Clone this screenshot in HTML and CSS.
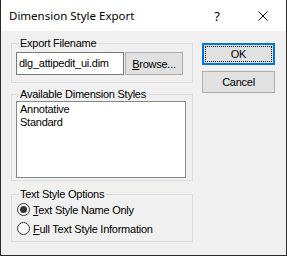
FILE: index.html
```html
<!DOCTYPE html>
<html>
<head>
<meta charset="utf-8">
<link rel="stylesheet" href="styles.css">
</head>
<body>
<div class="window">
  <div class="titlebar">
    <div class="title">Dimension Style Export</div>
    <div class="tb-btn help">?</div>
    <div class="tb-btn close">
      <svg width="10" height="10" viewBox="0 0 10 10"><path d="M0.5 0.5 L9.5 9.5 M9.5 0.5 L0.5 9.5" stroke="#000" stroke-width="1" fill="none"/></svg>
    </div>
  </div>
  <div class="content">
    <div class="left">
      <fieldset class="group g1">
        <legend>Export Filename</legend>
        <div class="file-row">
          <div class="textbox">dlg_attipedit_ui.dim</div>
          <div class="btn browse"><u>B</u>rowse...</div>
        </div>
      </fieldset>
      <fieldset class="group g2">
        <legend>Available Dimension Styles</legend>
        <div class="listbox">
          <div class="item">Annotative</div>
          <div class="item">Standard</div>
        </div>
      </fieldset>
      <fieldset class="group g3">
        <legend>Text Style Options</legend>
        <div class="radio-row"><span class="radio checked"></span><span><u>T</u>ext Style Name Only</span></div>
        <div class="radio-row"><span class="radio"></span><span><u>F</u>ull Text Style Information</span></div>
      </fieldset>
    </div>
    <div class="right">
      <div class="btn dlg default">OK</div>
      <div class="btn dlg">Cancel</div>
    </div>
  </div>
</div>
</body>
</html>
```
FILE: styles.css
```css
html, body {
  margin: 0;
  padding: 0;
  background: #f0f0f0;
}
.window {
  width: 287px;
  height: 256px;
  box-sizing: border-box;
  border: 1px solid #2b2b2b;
  border-top: none;
  background: #f0f0f0;
  display: flex;
  flex-direction: column;
  font-family: "Liberation Sans", Arial, sans-serif;
  font-size: 11px;
  letter-spacing: -0.25px;
  color: #000;
}
.titlebar {
  height: 31px;
  background: #fff;
  display: flex;
  align-items: center;
  flex: none;
  letter-spacing: 0;
}
.title {
  flex: 1;
  padding-left: 8px;
  font-family: "Noto Sans", sans-serif;
  font-size: 11.5px;
  padding-bottom: 1px;
}
.tb-btn {
  width: 46px;
  height: 31px;
  display: flex;
  align-items: center;
  justify-content: center;
}
.help {
  font-family: "Noto Sans", sans-serif;
  font-size: 13px;
}
.content {
  display: flex;
  padding: 6px 11px 0 10px;
  gap: 9px;
}
.left {
  width: 182px;
  display: flex;
  flex-direction: column;
}
.group {
  margin: 0;
  border: 1px solid #dcdcdc;
  padding: 0 6px 0 4px;
  min-width: 0;
}
.group legend {
  padding: 0 1px;
  margin-left: 3px;
  line-height: 13px;
  height: 13px;
}
.g1 { padding-top: 2px; padding-bottom: 7px; }
.g2 { margin-top: 5px; padding-top: 0; padding-bottom: 2px; }
.g3 { margin-top: 7px; padding-top: 0; padding-bottom: 3px; }
.file-row {
  display: flex;
  gap: 1px;
}
.textbox {
  width: 108px;
  height: 23px;
  box-sizing: border-box;
  border: 1px solid #7a7a7a;
  background: #fff;
  padding-left: 2px;
  line-height: 21px;
}
.btn {
  box-sizing: border-box;
  border: 1px solid #adadad;
  background: #e1e1e1;
  display: flex;
  align-items: center;
  justify-content: center;
}
.browse {
  width: 58px;
  height: 23px;
}
.listbox {
  height: 77px;
  width: 170px;
  box-sizing: border-box;
  border: 1px solid #828790;
  background: #fff;
  padding: 1px 0 0 3px;
}
.item {
  line-height: 13px;
}
.radio-row {
  height: 19px;
  display: flex;
  align-items: center;
  gap: 3px;
}
.radio-row:first-of-type {
  margin-top: -1px;
}
.radio {
  width: 13px;
  height: 13px;
  box-sizing: border-box;
  border-radius: 50%;
  border: 1px solid #333;
  background: #fff;
  display: flex;
  align-items: center;
  justify-content: center;
  margin-left: 1px;
}
.radio.checked::after {
  content: "";
  width: 7px;
  height: 7px;
  border-radius: 50%;
  background: #333;
}
.right {
  display: flex;
  flex-direction: column;
  gap: 6px;
  padding-top: 6px;
}
.dlg {
  width: 73px;
  height: 22px;
}
.default {
  border: 2px solid #0078d7;
  outline: 1px dotted #000;
  outline-offset: -4px;
}
```
